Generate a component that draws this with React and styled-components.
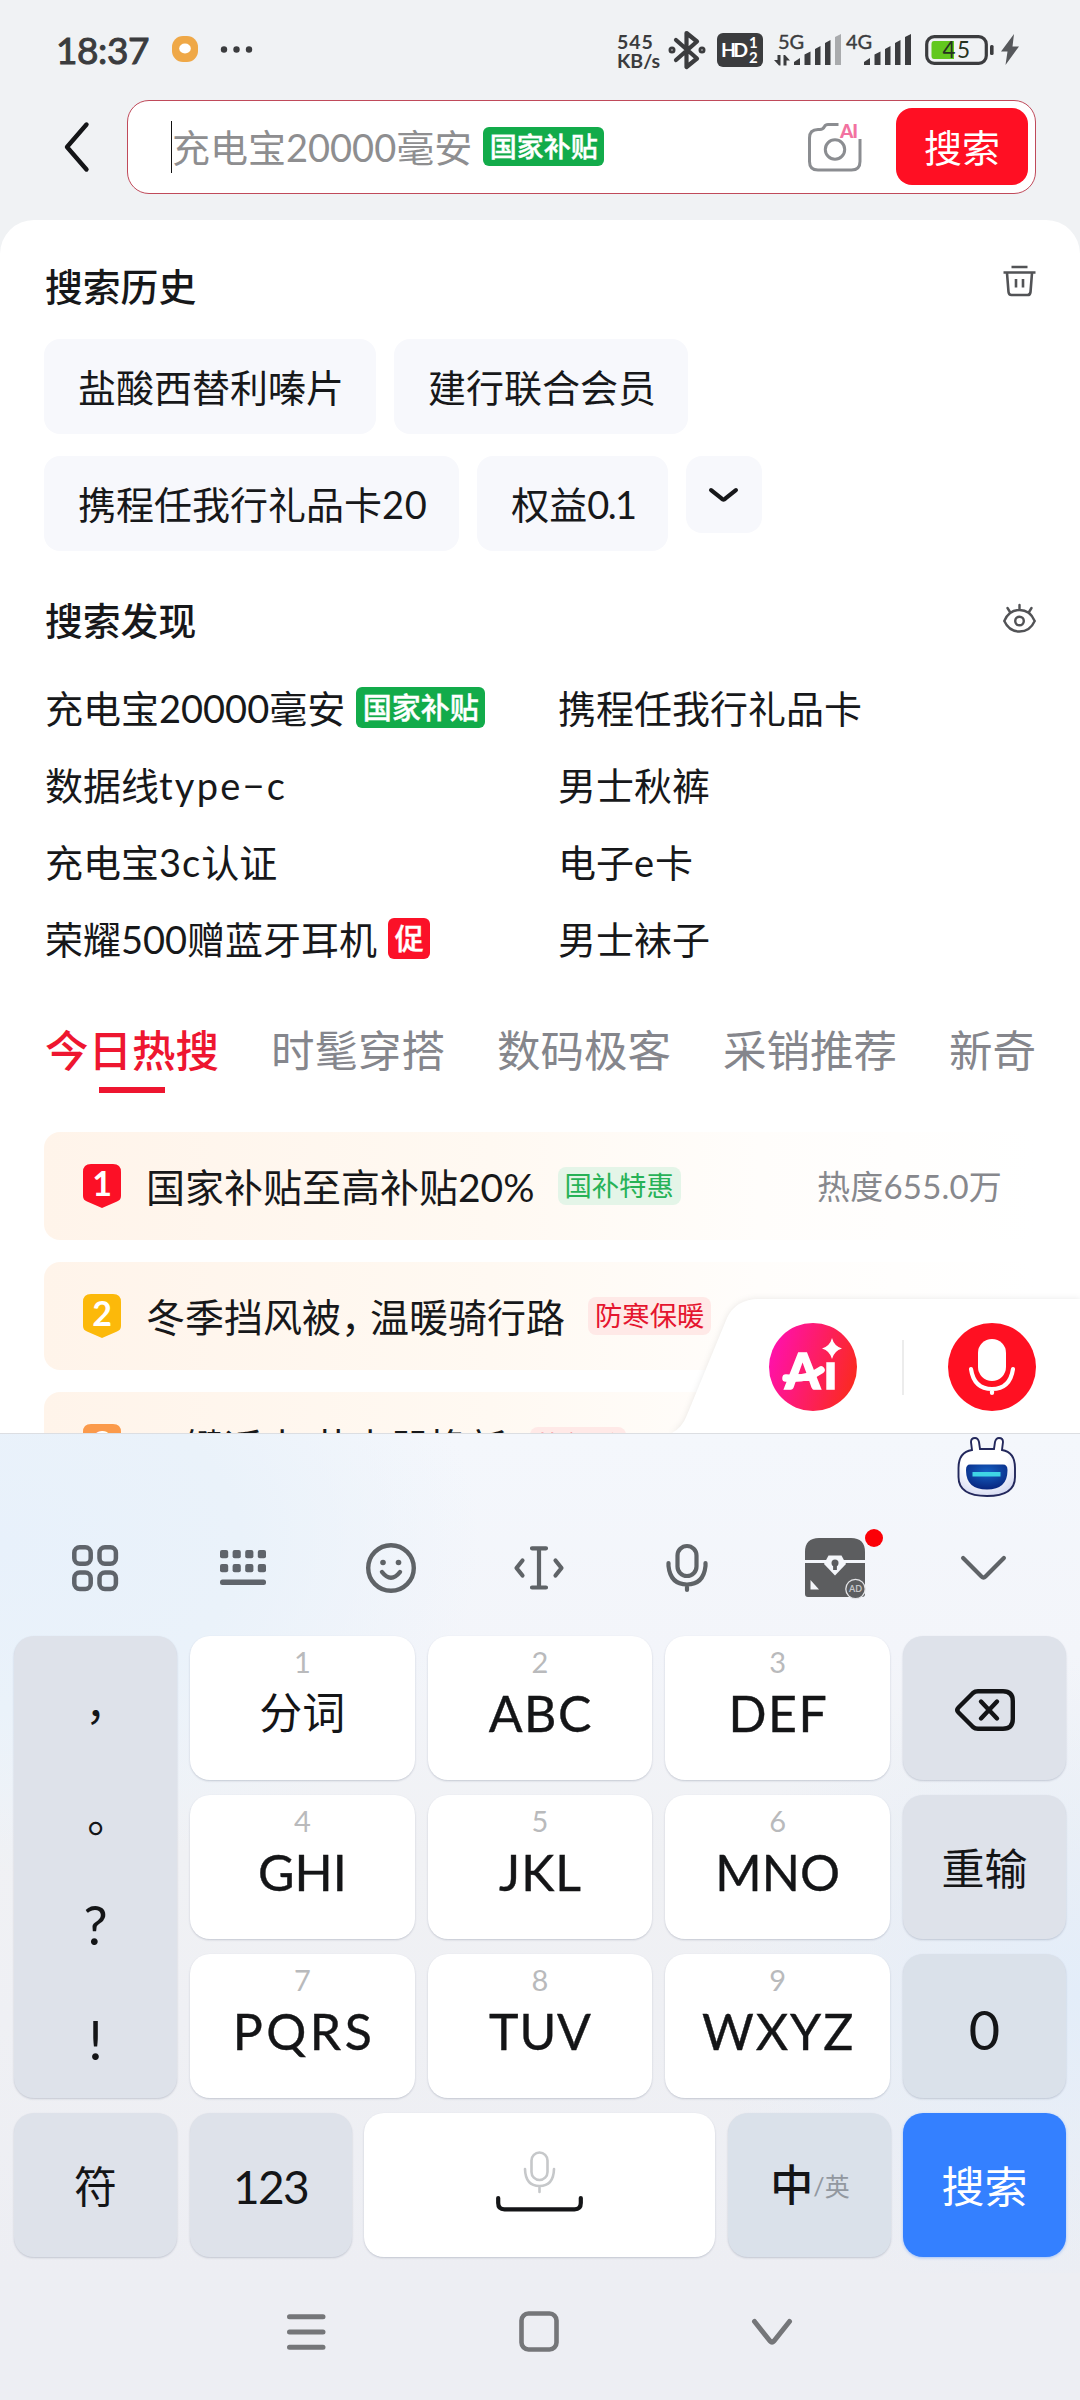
import React from 'react';
import styled, { createGlobalStyle } from 'styled-components';

const GlobalStyle = createGlobalStyle`
  * {
    box-sizing: border-box;
  }
  body {
    margin: 0;
    background: #f0f2f4;
    font-family: Lato, 'Noto Sans CJK SC', sans-serif;
    line-height: 1;
    color: #17181a;
  }
  svg {
    display: block;
    flex: none;
    overflow: visible;
  }
`;

const Screen = styled.div`
  width: 1080px;
  height: 2400px;
  display: flex;
  flex-direction: column;
  overflow: hidden;
  background: #f0f2f4;
  white-space: nowrap;
`;

/* ---------- status bar ---------- */

const StatusBar = styled.header`
  height: 100px;
  flex: none;
  display: flex;
  align-items: center;
  padding: 0 61px 1px 56px;
  color: #3b3c3e;
`;

const Clock = styled.span`
  width: 116px;
  font-size: 37px;
  letter-spacing: -0.4px;
  -webkit-text-stroke: 1px #3b3c3e;
`;

const StatusIcons = styled.div`
  display: flex;
  align-items: center;
  margin-left: auto;
`;

const NetSpeed = styled.div`
  display: flex;
  flex-direction: column;
  width: 52px;
  padding-top: 3px;
  font-size: 19.5px;
  line-height: 19px;
  font-weight: 700;
`;

/* ---------- search row ---------- */

const SearchRow = styled.div`
  height: 120px;
  flex: none;
  display: flex;
  align-items: flex-start;
  padding: 0 44px 0 64px;
`;

const BackButton = styled.div`
  width: 63px;
  height: 94px;
  display: flex;
  align-items: center;
`;

const SearchBox = styled.div`
  flex: 1;
  height: 94px;
  display: flex;
  align-items: center;
  padding: 0 7px 1px 43px;
  background: #fff;
  border: 1px solid #c04a5a;
  border-radius: 22px;
`;

const Caret = styled.i`
  width: 1px;
  height: 52px;
  background: #111;
`;

const Placeholder = styled.span`
  margin-right: 11px;
  font-size: 38px;
  color: #8e8e90;
`;

const Badge = styled.span`
  display: inline-flex;
  align-items: center;
  justify-content: center;
  height: ${(p) => (p.$small ? 39 : 41)}px;
  padding: 0 6.5px 1px;
  border-radius: 6px;
  background: ${(p) => p.$color || '#12ab4a'};
  color: #fff;
  font-size: ${(p) => (p.$small ? 27 : 29)}px;
  font-weight: 500;
  -webkit-text-stroke: 0.4px #fff;
`;

const SearchButton = styled.div`
  width: 132px;
  height: 77px;
  margin-left: 34px;
  display: flex;
  align-items: center;
  justify-content: center;
  border-radius: 16px;
  background: #ff0f23;
  color: #fff;
  font-size: 38px;
`;

const CameraWrap = styled.div`
  margin-left: auto;
`;

/* ---------- main panel ---------- */

const Panel = styled.main`
  position: relative;
  height: 1213px;
  flex: none;
  overflow: hidden;
  padding: 0 44px;
  border-radius: 34px 34px 0 0;
  background: #fff;
`;

const SectionHead = styled.div`
  height: ${(p) => p.$height}px;
  display: flex;
  align-items: center;
  justify-content: space-between;
  padding-top: ${(p) => p.$top || 0}px;
`;

const SectionTitle = styled.h2`
  margin: 0 0 0 1px;
  font-size: 37.8px;
  font-weight: 500;
`;

const HeadIcon = styled.div`
  padding-bottom: ${(p) => p.$lift}px;
`;

const ChipRow = styled.div`
  display: flex;
  gap: 18px;
  margin-bottom: 22px;
`;

const Chip = styled.div`
  height: 95px;
  display: flex;
  align-items: center;
  padding: 0 32px 0 34px;
  border-radius: 16px;
  background: #f7f8fc;
  font-size: 38px;
`;

const Spaced = styled.span`
  letter-spacing: ${(p) => p.$by}px;
`;

const MoreChip = styled(Chip)`
  width: 76px;
  height: 77px;
  padding: 0;
  justify-content: center;
`;

const DiscoverGrid = styled.div`
  display: grid;
  grid-template-columns: 513px 1fr;
  grid-auto-rows: 77px;
  align-items: center;
  padding-left: 1px;
  font-size: 38px;
`;

const DiscoverItem = styled.div`
  display: flex;
  align-items: center;
  gap: 11px;
`;

const Tabs = styled.nav`
  height: 155px;
  display: flex;
  align-items: flex-start;
  gap: 52px;
  padding: 52px 0 0 1px;
`;

const Tab = styled.div`
  display: flex;
  flex-direction: column;
  align-items: center;
  gap: 14px;
  font-size: 43.5px;
  font-weight: ${(p) => (p.$active ? 500 : 400)};
  color: ${(p) => (p.$active ? '#ee1630' : '#85868c')};

  &::after {
    content: '';
    width: 66px;
    height: 6px;
    background: ${(p) => (p.$active ? '#ee1630' : 'transparent')};
  }
`;

const HotRow = styled.div`
  height: 108px;
  margin-bottom: 22px;
  display: flex;
  align-items: center;
  padding: 0 34px 0 39px;
  border-radius: 16px;
  background: linear-gradient(90deg, #fff4ea 0%, #fff9f2 45%, #fffdfb 72%, #fff 100%);
  font-size: 39px;
`;

const HotText = styled.span`
  margin: 2px 23px 0 25px;
`;

const Tag = styled.span`
  height: 38px;
  display: flex;
  align-items: center;
  padding: 0 7px;
  border-radius: 8px;
  font-size: 27.3px;
  color: ${(p) => (p.$green ? '#27b257' : '#e5152f')};
  background: ${(p) => (p.$green ? '#e4f5e8' : '#ffe9e7')};
`;

const Heat = styled.span`
  margin-left: auto;
  font-size: 33px;
  letter-spacing: 0.2px;
  color: #87888d;
`;

const Dock = styled.div`
  position: absolute;
  right: 0;
  bottom: 0;
  width: 408px;
  height: 135px;
  display: flex;
  align-items: center;
  justify-content: flex-end;
  padding: 3px 44px 0 0;
  filter: drop-shadow(0 0 3px rgba(0, 0, 0, 0.09));

  &::before {
    content: '';
    position: absolute;
    inset: 0;
    background: #fff;
    clip-path: path('M0 135 Q10 130 15 117 L55 20 Q64 1 87 1 H408 V135 Z');
  }
  > * {
    position: relative;
  }
`;

const DockDivider = styled.i`
  width: 2px;
  height: 55px;
  margin: 0 44px 0 45px;
  background: #ececec;
`;

/* ---------- keyboard ---------- */

const Keyboard = styled.section`
  height: 840px;
  flex: none;
  border-top: 1px solid #dcdee2;
  padding: 0 14px;
  background:
    radial-gradient(ellipse 480px 330px at 0 110px, #e8f1fb 0%, #eaf2fa 50%, rgba(241, 245, 251, 0) 100%),
    radial-gradient(ellipse 380px 330px at 100% 560px, #e3edf9 0%, rgba(230, 238, 248, 0) 100%),
    linear-gradient(180deg, #f4f7fc 0%, #f3f5fa 26%, #f0f1f4 50%, #eff0f4 70%, #edeef3 100%);
`;

const Mascot = styled.div`
  height: 63px;
  display: flex;
  justify-content: flex-end;
  align-items: flex-end;
  padding-right: 49px;
`;

const Toolbar = styled.div`
  height: 139px;
  display: grid;
  grid-template-columns: repeat(7, 148px);
  padding: 2px 0 0 7px;
  justify-items: center;
  align-items: center;
`;

const NewDot = styled.i`
  position: absolute;
  top: -9px;
  right: -18px;
  width: 18px;
  height: 18px;
  border-radius: 50%;
  background: #fb0007;
`;

const ToolIcon = styled.div`
  position: relative;
`;

const Keys = styled.div`
  display: grid;
  grid-template-columns: 163px repeat(3, 1fr) 163px;
  grid-auto-rows: 144px;
  gap: 15px 13px;
`;

const BottomKeys = styled(Keys)`
  margin-top: 15px;
  grid-template-columns: 163px 162px 1fr 163px 163px;
  column-gap: 12.5px;
`;

const Key = styled.div`
  display: flex;
  flex-direction: column;
  align-items: center;
  justify-content: center;
  padding-top: 3px;
  border-radius: 20px;
  background: #fff;
  box-shadow: 0 1px 2px rgba(60, 70, 100, 0.24);
  font-size: 43px;
  color: #141517;
`;

const LetterKey = styled(Key)`
  justify-content: flex-start;
  padding-top: 11px;
`;

const Hint = styled.span`
  height: 29px;
  font-size: 29px;
  color: #b9babc;
`;

const Letters = styled.span`
  height: 50px;
  margin-top: 12px;
  margin-right: -${(p) => p.$spacing}px;
  font-size: ${(p) => (p.$cjk ? 43 : 50)}px;
  line-height: 50px;
  letter-spacing: ${(p) => p.$spacing}px;
  -webkit-text-stroke: ${(p) => (p.$cjk ? 0 : 0.4)}px #141517;
`;

const SideKey = styled(Key)`
  background: #dee2ea;
`;

const NumberKey = styled(SideKey)`
  font-size: 46px;
  letter-spacing: -1.6px;
`;

const PunctuationKey = styled(SideKey)`
  grid-row: span 3;
  justify-content: flex-start;
  padding-top: 0;
`;

const Mark = styled.span`
  height: 115.5px;
  flex: none;
  display: flex;
  align-items: center;
  padding-top: ${(p) => p.$drop || 0}px;
  font-family: ${(p) => (p.$cjk ? "'Noto Sans CJK TC', sans-serif" : 'inherit')};
  font-size: ${(p) => (p.$cjk ? 43 : 54)}px;
`;

const CoolKey = styled(SideKey)`
  background: #dae1ea;
`;

const ZeroKey = styled(CoolKey)`
  padding-top: 8px;
  font-size: 54px;
`;

const LangKey = styled(CoolKey)`
  flex-direction: row;
  align-items: center;
  font-weight: 500;
  padding: 0 0 2px 2px;

  small {
    font-size: 25px;
    font-weight: 400;
    color: #9298a0;
    padding-top: 4px;
  }
`;

const SpaceKey = styled(Key)`
  padding-top: 0;
`;

const EnterKey = styled(Key)`
  background: #3480ff;
  box-shadow: 0 1px 3px rgba(52, 128, 255, 0.4);
  color: #fff;
`;

const NavBar = styled.footer`
  height: 127px;
  flex: none;
  display: flex;
  align-items: center;
  justify-content: center;
  gap: 193px;
  background: #edeef3;
  padding: 0 2px 10px 0;
`;

/* ---------- data ---------- */

const discover = [
  { id: 1, text: '充电宝20000毫安', badge: '国家补贴' },
  { id: 2, text: '携程任我行礼品卡' },
  { id: 3, text: <span>数据线<Spaced $by={2.2}>type−c</Spaced></span> },
  { id: 4, text: '男士秋裤' },
  { id: 5, text: <span>充电宝<Spaced $by={1}>3c</Spaced>认证</span> },
  { id: 6, text: <span>电子<Spaced $by={1}>e</Spaced>卡</span> },
  { id: 7, text: '荣耀500赠蓝牙耳机', badge: '促', color: '#fb1128' },
  { id: 8, text: '男士袜子' },
];

const tabs = ['今日热搜', '时髦穿搭', '数码极客', '采销推荐', '新奇'];

// each key: label and letter spacing
const letterKeys = [
  [['分词', 0], ['ABC', 1.5], ['DEF', 1.5]],
  [['GHI', 0], ['JKL', 1], ['MNO', 0]],
  [['PQRS', 3.5], ['TUV', 0.8], ['WXYZ', 2]],
];

/* ---------- icons ---------- */

const BluetoothIcon = () => (
  <svg width="36" height="40" viewBox="0 0 36 40" fill="none" stroke="#3b3c3e" strokeWidth="4.2" strokeLinejoin="round" strokeLinecap="round">
    <path d="M7 10 L28 28.5 L17.5 37 V3 L28 11.5 L7 30" />
    <circle cx="3" cy="20" r="1.4" />
    <circle cx="33" cy="20" r="1.4" />
  </svg>
);

const HdIcon = () => (
  <svg width="46" height="34" viewBox="0 0 46 34">
    <rect width="46" height="34" rx="6" fill="#3b3c3e" />
    <text x="4" y="24" fontSize="19.5" fontWeight="700" fill="#fff" textLength="27">HD</text>
    <text x="32" y="15" fontSize="15" fontWeight="700" fill="#fff">1</text>
    <text x="32" y="30" fontSize="15" fontWeight="700" fill="#fff">2</text>
  </svg>
);

const Signal = ({ label, arrows, weak }) => (
  <svg width="67" height="34" viewBox="0 0 67 34" fill="#3b3c3e">
    <text x={arrows ? 4 : 2} y="15.5" fontSize="20" stroke="#3b3c3e" strokeWidth="0.4" textLength="26">{label}</text>
    {arrows && <path d="M3.5 22 H6.5 V32.500 H5 L0 27 H3.500 Z M9.500 32.500 V22 H11 L16 27.500 H12.500 V32.500 Z" />}
    <path d="M20 32 V29 L26 25 V32 Z M30.500 32 V21.500 L36.500 18.500 V32 Z M41 32 V16 L46.500 13 V32 Z M51 32 V10 L56.500 7 V32 Z" />
    <path d="M61 32 V4 L67 1 V32 Z" fill={weak ? '#a9abad' : '#3b3c3e'} />
  </svg>
);

const BatteryIcon = () => (
  <svg width="70" height="30" viewBox="0 0 70 30">
    <rect x="1.7" y="1.7" width="59.600" height="26.600" rx="7.500" fill="none" stroke="#3b3c3e" strokeWidth="3.200" />
    <path d="M9 6 H29 V24 H9 Q6.500 24 6.500 21 V9 Q6.500 6 9 6 Z" fill="#62c81e" />
    <rect x="65" y="10" width="3.600" height="10" rx="1.500" fill="#3b3c3e" />
    <text x="17.500" y="23" fontSize="22.500" fill="#26331f" textLength="27.500">45</text>
  </svg>
);

const BoltIcon = () => (
  <svg width="18" height="31" viewBox="0 0 18 31" fill="#56585b">
    <path d="M13 0 L0 17.500 H6.500 L4.500 31 L18 12.500 H11.500 Z" />
  </svg>
);

const CameraIcon = () => (
  <svg width="54" height="50" viewBox="0 0 54 50" fill="none" stroke="#8b8d91" strokeWidth="3">
    <path d="M30.500 2.500 H20 Q17.500 2.500 16.500 4.500 Q15 7.500 12 7.500 H10 Q1.500 7.500 1.500 16 V39.500 Q1.500 48 10 48 H43.500 Q52 48 52 39.500 V17" />
    <circle cx="27" cy="27.500" r="9.700" />
    <text x="32" y="15.500" fontSize="19" fontWeight="900" fill="#f272a0" stroke="none" textLength="18">AI</text>
  </svg>
);

const TrashIcon = () => (
  <svg width="33" height="32" viewBox="0 0 33 32" fill="none" stroke="#525356" strokeWidth="2.600">
    <path d="M8.500 2 H24.500 M0.500 7.500 H32.500 M4 8 L5.500 27 Q5.800 30 8.500 30 H24.500 Q27.200 30 27.500 27 L29 8 M13 14 V22.500 M20 14 V22.500" />
  </svg>
);

const EyeIcon = () => (
  <svg width="33" height="29" viewBox="0 0 33 29" fill="none" stroke="#525356" strokeWidth="2.400" strokeLinecap="round">
    <path d="M1.300 17 Q6 6 16.500 6 Q27 6 31.700 17 Q27 27.500 16.500 27.500 Q6 27.500 1.300 17 Z M16.500 5.500 V1 M7 8 L4.500 4 M26 8 L28.500 4" />
    <circle cx="16.500" cy="17" r="4.300" />
  </svg>
);

const RankIcon = ({ rank, color }) => (
  <svg width="38" height="44" viewBox="0 0 38 44">
    <path d="M8 0 H30 Q38 0 38 8 V32 Q38 36 34 37.500 L19 44 L4 37.500 Q0 36 0 32 V8 Q0 0 8 0 Z" fill={color} />
    <text x="19" y="32" fontSize="34" fontWeight="700" fill="#fff" textAnchor="middle">{rank}</text>
  </svg>
);

const AiIcon = () => (
  <svg width="88" height="88" viewBox="0 0 88 88">
    <defs>
      <linearGradient id="ai" x1="0" y1="0.300" x2="1" y2="0.600">
        <stop offset="0" stopColor="#ff10ae" />
        <stop offset="1" stopColor="#fb2a20" />
      </linearGradient>
    </defs>
    <circle cx="44" cy="44" r="44" fill="url(#ai)" />
    <text x="16" y="66" fontSize="50" fontWeight="900" fill="#fff" stroke="#fff" strokeWidth="1.500" textLength="52">Aı</text>
    <path d="M17 55 Q38 57 52 47" fill="none" stroke="#fff" strokeWidth="7.500" strokeLinecap="round" />
    <path d="M63 15 Q65 23 73 25.500 Q65 28 63 36 Q61 28 53 25.500 Q61 23 63 15 Z" fill="#fff" />
  </svg>
);

const VoiceIcon = () => (
  <svg width="88" height="88" viewBox="0 0 88 88">
    <circle cx="44" cy="44" r="44" fill="#ff1022" />
    <rect x="30" y="16" width="28" height="42" rx="14" fill="#fff" />
    <path d="M23 46 Q26 66 44 66 Q62 66 65 46 M44 66 V70" fill="none" stroke="#fff" strokeWidth="4.200" strokeLinecap="round" />
  </svg>
);

const RobotIcon = () => (
  <svg width="60" height="60" viewBox="0 0 60 60">
    <defs>
      <radialGradient id="face" cx="0.450" cy="0.300" r="0.800">
        <stop offset="0.500" stopColor="#fff" />
        <stop offset="1" stopColor="#cdd3f0" />
      </radialGradient>
      <radialGradient id="visor" cx="0.500" cy="0.300" r="0.700">
        <stop offset="0" stopColor="#1561c4" />
        <stop offset="1" stopColor="#08257e" />
      </radialGradient>
    </defs>
    <path d="M15 13 L14 5 Q14 1 18 1 Q21 1 22 5 L23 12 H37 L38 5 Q39 1 42 1 Q46 1 46 5 L45 13 Q58 15 58 31 V40 Q58 59 30 59 Q1.500 59 1.500 40 V31 Q1.500 15 15 13 Z" fill="url(#face)" stroke="#23285c" strokeWidth="1.900" />
    <path d="M13 27.500 H46 Q50.500 27.500 50.500 33 Q50.500 52.500 30 52.500 Q9 52.500 9 33 Q9 27.500 13 27.500 Z" fill="url(#visor)" />
    <rect x="15.500" y="35" width="28" height="4.500" fill="#3fd5e5" />
  </svg>
);

const GridIcon = () => (
  <svg width="46" height="46" viewBox="0 0 46 46" fill="none" stroke="#5f646b" strokeWidth="4.500">
    {[2.3, 27.5].map((x) => [2.3, 27.5].map((y) => (
      <rect key={`${x}-${y}`} x={x} y={y} width="16.400" height="16.400" rx="5.500" />
    )))}
  </svg>
);

const KeyboardIcon = () => (
  <svg width="46" height="36" viewBox="0 0 46 36" fill="#5f646b">
    {[0, 12.6, 25.2, 37.8].map((x) => [0, 14].map((y) => (
      <rect key={`${x}-${y}`} x={x} y={y} width="8.200" height="8.200" rx="2" />
    )))}
    <rect y="29.500" width="46" height="5.400" rx="2.500" />
  </svg>
);

const SmileIcon = () => (
  <svg width="50" height="50" viewBox="0 0 50 50" fill="none" stroke="#5f6367" strokeWidth="4.400" strokeLinecap="round">
    <circle cx="25" cy="25" r="22.800" />
    <path d="M16 29 Q25 40.500 34 29" />
    <circle cx="17" cy="19.500" r="2.800" fill="#5f6367" stroke="none" />
    <circle cx="32.500" cy="19.500" r="2.800" fill="#5f6367" stroke="none" />
  </svg>
);

const CursorIcon = () => (
  <svg width="50" height="44" viewBox="0 0 50 44" fill="none" stroke="#5f6367" strokeWidth="4.200" strokeLinecap="round" strokeLinejoin="round">
    <path d="M18 2.300 H32 M18 41.500 H32 M25 2.300 V41.500 M8.500 14.500 L2.500 22 L8.500 29.500 M41.500 14.500 L47.500 22 L41.500 29.500" />
  </svg>
);

const MicIcon = () => (
  <svg width="42" height="48" viewBox="0 0 42 48" fill="none" stroke="#5f6367" strokeWidth="4.200" strokeLinecap="round">
    <rect x="11.500" y="2" width="19" height="30" rx="9.500" />
    <path d="M2.500 19 V22 Q4.500 40.500 21 40.500 Q37.500 40.500 39.500 22 V19 M21 41 V46" />
  </svg>
);

const ChestIcon = () => (
  <svg width="60" height="60" viewBox="0 0 60 60">
    <path d="M0 22 V14 Q0 0 14 0 H46 Q60 0 60 14 V22 Z M0 25 H60 V56 Q60 59 57 59 H3 Q0 59 0 56 Z" fill="#5c5d5f" />
    <path d="M23.500 17.500 H36.500 L41 26 L30 37.500 L19 26 Z" fill="#f4f6fa" />
    <circle cx="30" cy="25" r="3.500" fill="#5c5d5f" />
    <path d="M30 25 V32" stroke="#5c5d5f" strokeWidth="3.800" />
    <path d="M5.500 42 L14 51.500 H5.500 Z" fill="#f4f6fa" />
    <circle cx="50.500" cy="51" r="9.700" fill="#5c5d5f" stroke="#e3e4e7" strokeWidth="1.300" />
    <text x="50.500" y="54.300" fontSize="9" fontWeight="700" fill="#c4c5c8" textAnchor="middle">AD</text>
  </svg>
);

const Chevron = ({ width, height, stroke, color }) => (
  <svg width={width} height={height} viewBox={`0 0 ${width} ${height}`} fill="none" stroke={color} strokeWidth={stroke} strokeLinecap="round" strokeLinejoin="round">
    <path d={`M${stroke / 2} ${stroke / 2} L${width / 2 - 2} ${height - stroke / 2 - 1.5} Q${width / 2} ${height - stroke / 2 + 0.5} ${width / 2 + 2} ${height - stroke / 2 - 1.5} L${width - stroke / 2} ${stroke / 2}`} />
  </svg>
);

const BackspaceIcon = () => (
  <svg width="60" height="42" viewBox="0 0 60 42" fill="none" stroke="#131416" strokeWidth="4.400" strokeLinecap="round" strokeLinejoin="round">
    <path d="M23 2.200 H48 Q57.800 2.200 57.800 12 V30 Q57.800 39.800 48 39.800 H23 Q20 39.800 18 38 L3.500 23.500 Q1 21 3.500 18.500 L18 4 Q20 2.200 23 2.200 Z M26 12.500 L42 29.500 M42 12.500 L26 29.500" />
  </svg>
);

const SpaceIcon = () => (
  <svg width="87" height="59" viewBox="0 0 87 59" fill="none">
    <g stroke="#c6c8ca" strokeWidth="2.600" strokeLinecap="round">
      <rect x="35.500" y="-3.500" width="16" height="27.500" rx="8" />
      <path d="M29 13 Q29.500 30 43.500 30 Q57.500 30 58 13 M43.500 30 V36" />
    </g>
    <path d="M2.200 42 V47 Q2.200 53.300 8.500 53.300 H78.500 Q84.800 53.300 84.800 47 V42" stroke="#141517" strokeWidth="4.200" strokeLinecap="round" />
  </svg>
);

const App = () => (
  <>
    <GlobalStyle />
    <Screen>
      <StatusBar>
        <Clock>18:37</Clock>
        <svg width="82" height="27" viewBox="0 0 82 27">
          <rect width="26" height="26" rx="11" fill="#efa847" />
          <ellipse cx="13" cy="12.500" rx="5.800" ry="5" fill="#fff" />
          <circle cx="52" cy="13.500" r="3.200" fill="#3b3c3e" />
          <circle cx="64.500" cy="13.500" r="3.200" fill="#3b3c3e" />
          <circle cx="77" cy="13.500" r="3.200" fill="#3b3c3e" />
        </svg>
        <StatusIcons>
          <NetSpeed>
            <Spaced $by={0.9}>545</Spaced>
            <span>KB/s</span>
          </NetSpeed>
          <BluetoothIcon />
          <svg width="12" height="1" />
          <HdIcon />
          <svg width="11" height="1" />
          <Signal label="5G" arrows weak />
          <svg width="3" height="1" />
          <Signal label="4G" />
          <svg width="14" height="1" />
          <BatteryIcon />
          <svg width="6" height="1" />
          <BoltIcon />
        </StatusIcons>
      </StatusBar>

      <SearchRow>
        <BackButton>
          <svg width="25" height="50" viewBox="0 0 25 50" fill="none" stroke="#141517" strokeWidth="4.400" strokeLinecap="round" strokeLinejoin="round">
            <path d="M22.500 2.500 L3 25 L22.500 47.500" />
          </svg>
        </BackButton>
        <SearchBox>
          <Caret />
          <Placeholder>充电宝20000毫安</Placeholder>
          <Badge $small>国家补贴</Badge>
          <CameraWrap>
            <CameraIcon />
          </CameraWrap>
          <SearchButton>搜索</SearchButton>
        </SearchBox>
      </SearchRow>

      <Panel>
        <SectionHead $height={119} $top={14}>
          <SectionTitle>搜索历史</SectionTitle>
          <HeadIcon $lift={11}>
            <TrashIcon />
          </HeadIcon>
        </SectionHead>
        <ChipRow>
          <Chip>盐酸西替利嗪片</Chip>
          <Chip>建行联合会员</Chip>
        </ChipRow>
        <ChipRow>
          <Chip>
            携程任我行礼品卡<Spaced $by={0.6}>20</Spaced>
          </Chip>
          <Chip>
            权益<Spaced $by={-1.6}>0.1</Spaced>
          </Chip>
          <MoreChip>
            <Chevron width={29} height={14} stroke={4.2} color="#17181a" />
          </MoreChip>
        </ChipRow>

        <SectionHead $height={96}>
          <SectionTitle>搜索发现</SectionTitle>
          <HeadIcon $lift={6}>
            <EyeIcon />
          </HeadIcon>
        </SectionHead>
        <DiscoverGrid>
          {discover.map((item) => (
            <DiscoverItem key={item.id}>
              {item.text}
              {item.badge && <Badge $color={item.color}>{item.badge}</Badge>}
            </DiscoverItem>
          ))}
        </DiscoverGrid>

        <Tabs>
          {tabs.map((tab, i) => (
            <Tab key={tab} $active={i === 0}>{tab}</Tab>
          ))}
        </Tabs>

        <HotRow>
          <RankIcon rank="1" color="#fc1026" />
          <HotText>国家补贴至高补贴20%</HotText>
          <Tag $green>国补特惠</Tag>
          <Heat>热度655.0万</Heat>
        </HotRow>
        <HotRow>
          <RankIcon rank="2" color="#fcb90a" />
          <HotText>
            冬季挡风被<Spaced $by={-10}>，</Spaced>温暖骑行路
          </HotText>
          <Tag>防寒保暖</Tag>
        </HotRow>
        <HotRow>
          <RankIcon rank="3" color="#fb9a4b" />
          <HotText>一键适电 节电器换新</HotText>
          <Tag>换新季</Tag>
        </HotRow>

        <Dock>
          <AiIcon />
          <DockDivider />
          <VoiceIcon />
        </Dock>
      </Panel>

      <Keyboard>
        <Mascot>
          <RobotIcon />
        </Mascot>
        <Toolbar>
          <GridIcon />
          <KeyboardIcon />
          <SmileIcon />
          <CursorIcon />
          <MicIcon />
          <ToolIcon>
            <ChestIcon />
            <NewDot />
          </ToolIcon>
          <Chevron width={45} height={24} stroke={4.2} color="#5f6367" />
        </Toolbar>

        <Keys>
          <PunctuationKey>
            <Mark $cjk $drop={42}>，</Mark>
            <Mark $cjk $drop={34}>。</Mark>
            <Mark>?</Mark>
            <Mark>!</Mark>
          </PunctuationKey>
          {letterKeys.map((row, r) => (
            <React.Fragment key={row[0][0]}>
              {row.map(([letters, spacing], c) => (
                <LetterKey key={letters}>
                  <Hint>{r * 3 + c + 1}</Hint>
                  <Letters $cjk={letters === '分词'} $spacing={spacing}>{letters}</Letters>
                </LetterKey>
              ))}
              {r === 0 && (
                <SideKey>
                  <BackspaceIcon />
                </SideKey>
              )}
              {r === 1 && <SideKey>重输</SideKey>}
              {r === 2 && <ZeroKey>0</ZeroKey>}
            </React.Fragment>
          ))}
        </Keys>
        <BottomKeys>
          <SideKey>符</SideKey>
          <NumberKey>123</NumberKey>
          <SpaceKey>
            <SpaceIcon />
          </SpaceKey>
          <LangKey>
            中<small>/英</small>
          </LangKey>
          <EnterKey>搜索</EnterKey>
        </BottomKeys>
      </Keyboard>

      <NavBar>
        <svg width="39" height="36" viewBox="0 0 39 36" stroke="#757679" strokeWidth="5" strokeLinecap="round">
          <path d="M2.500 2.700 H36 M2.500 18 H36 M2.500 33.300 H36" />
        </svg>
        <svg width="40" height="41" viewBox="0 0 40 41" fill="none" stroke="#757679" strokeWidth="4.600">
          <rect x="2.500" y="2.500" width="35" height="36" rx="7" />
        </svg>
        <Chevron width={40} height={26} stroke={5} color="#757679" />
      </NavBar>
    </Screen>
  </>
);

export default App;
